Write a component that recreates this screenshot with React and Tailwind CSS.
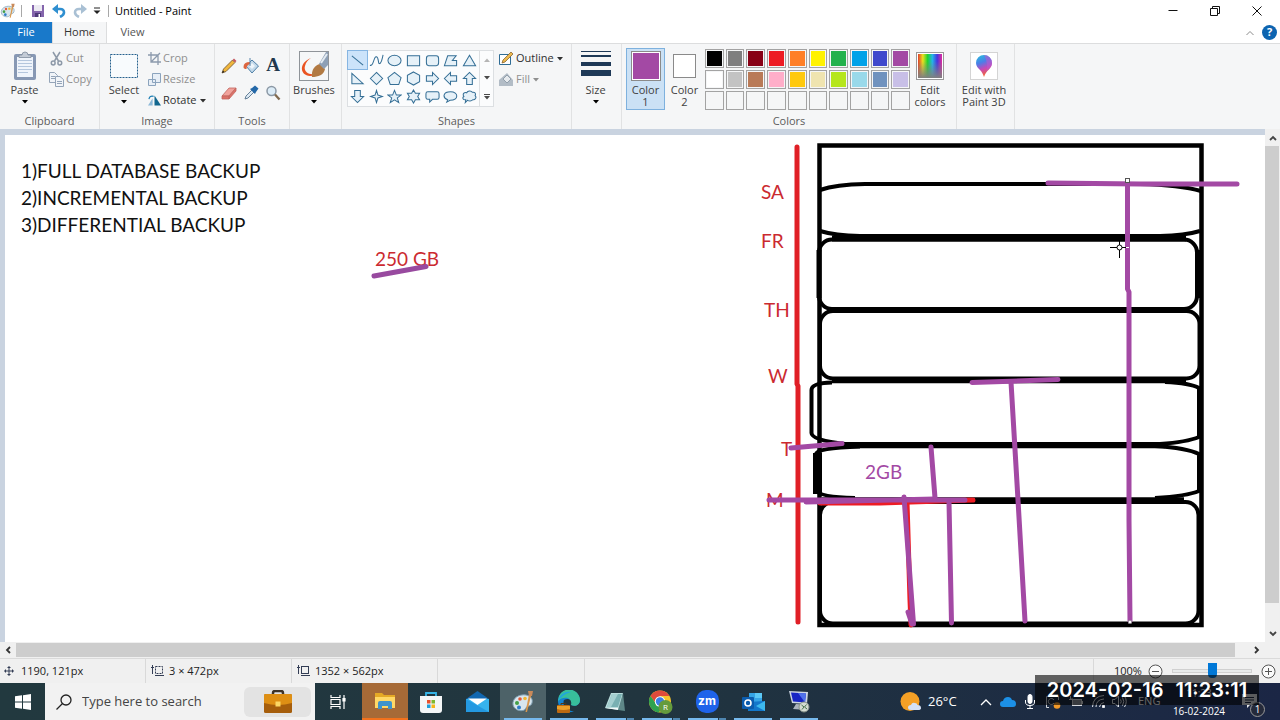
import React from 'react';
import clsx from 'clsx';

const PALETTE = [
  '#000000', '#7f7f7f', '#880015', '#ed1c24', '#ff7f27', '#fff200', '#22b14c', '#00a2e8', '#3f48cc', '#a349a4',
  '#ffffff', '#c3c3c3', '#b97a57', '#ffaec9', '#ffc90e', '#efe4b0', '#b5e61d', '#99d9ea', '#7092be', '#c8bfe7',
  '', '', '', '', '', '', '', '', '', '',
];

const SHAPES = [
  { name: 'Line', d: 'M2 3 L14 13' },
  { name: 'Curve', d: 'M1 13 C5 15 5 3 8 4 C11 5 9 13 12 11 C14 9 14 6 15 2' },
  { name: 'Oval', d: 'M1 8 A7 5.5 0 1 1 15 8 A7 5.5 0 1 1 1 8 Z' },
  { name: 'Rectangle', d: 'M1.5 3 H14.5 V13.500 H1.5 Z' },
  { name: 'Rounded rectangle', d: 'M4 3 H12 Q14.500 3 14.500 6 V10.500 Q14.500 13.500 12 13.500 H4 Q1.5 13.500 1.5 10.500 V6 Q1.5 3 4 3 Z' },
  { name: 'Polygon', d: 'M5 3 H14 L10 8 H14.500 V13.500 H1.500 Z' },
  { name: 'Triangle', d: 'M8 2.500 L14.500 13.500 H1.500 Z' },
  { name: 'Right triangle', d: 'M2 2.500 L14 13.500 H2 Z' },
  { name: 'Diamond', d: 'M8 1.500 L14.500 8 L8 14.500 L1.500 8 Z' },
  { name: 'Pentagon', d: 'M8 1.500 L15 7 L12.500 14.500 H3.500 L1 7 Z' },
  { name: 'Hexagon', d: 'M8 1 L14.500 4.500 V11.500 L8 15 L1.500 11.500 V4.500 Z' },
  { name: 'Right arrow', d: 'M1.500 5 H8 V1.500 L14.500 8 L8 14.500 V11 H1.500 Z' },
  { name: 'Left arrow', d: 'M14.500 5 H8 V1.500 L1.500 8 L8 14.500 V11 H14.500 Z' },
  { name: 'Up arrow', d: 'M5 14.500 V8 H1.500 L8 1.500 L14.500 8 H11 V14.500 Z' },
  { name: 'Down arrow', d: 'M5 1.500 V8 H1.500 L8 14.500 L14.500 8 H11 V1.500 Z' },
  { name: 'Four-point star', d: 'M8 1.500 L9.500 6.500 L14.500 8 L9.500 9.500 L8 14.500 L6.500 9.500 L1.500 8 L6.500 6.500 Z' },
  { name: 'Five-point star', d: 'M8 1.500 L10 6.500 H15 L11 9.500 L12.500 14.500 L8 11.500 L3.500 14.500 L5 9.500 L1 6.500 H6 Z' },
  { name: 'Six-point star', d: 'M8 1 L10 4.500 H14.500 L12.500 8 L14.500 11.500 H10 L8 15 L6 11.500 H1.500 L3.500 8 L1.500 4.500 H6 Z' },
  { name: 'Rounded callout', d: 'M3 3 H13 Q15 3 15 5 V9 Q15 11 13 11 H8 L5 14 V11 H3 Q1 11 1 9 V5 Q1 3 3 3 Z' },
  { name: 'Oval callout', d: 'M4 14 L5 11.500 C-1 9 0 3 8 3 C17 3 17 12 7.500 12 Z' },
  { name: 'Cloud callout', d: 'M4 11.500 C1 12 0 9 2 8 C0 5 3 3 5 4 C6 1.500 10 1.500 11 3.500 C14 3 15 5 14 7 C16 9 14 12 11.500 11.500 C10 13.500 7 13 6 12 L3.500 14.500 Z' },
];

const Caret = ({ className }) => (
  <svg viewBox="0 0 6 4" className={clsx('w-[6px] h-[4px]', className)}>
    <path d="M0 0 H6 L3 3.500 Z" fill="currentColor" />
  </svg>
);

const Group = ({ label, className, children }) => (
  <section className={clsx('flex flex-col shrink-0 border-r border-[#e1e2e3]', className)}>
    <div className="flex h-[68px] pt-1">{children}</div>
    <div className="h-[17px] text-center leading-[17px] text-[#5c5c5c]">{label}</div>
  </section>
);

const BigButton = ({ icon, label, second, caret, className }) => (
  <button type="button" className={clsx('flex flex-col items-center h-[62px] shrink-0', className)}>
    <span className="flex h-[36px] items-center justify-center">{icon}</span>
    <span className="leading-[12px]">
      {label}
      {second && <><br />{second}</>}
    </span>
    {caret && <Caret className="mt-1 text-black" />}
  </button>
);

const SmallButton = ({ icon, label, disabled, caret }) => (
  <button
    type="button"
    disabled={disabled}
    className={clsx('flex h-[21px] items-center gap-[2px] whitespace-nowrap', disabled ? 'text-[#8f8f8f]' : 'text-[#303030]')}
  >
    {icon}
    <span>{label}</span>
    {caret && <Caret className="ml-[1px]" />}
  </button>
);

const PaletteIcon = ({ className }) => (
  <svg viewBox="0 0 24 24" className={className}>
    <path d="M2 15 C1 8 8 4 15 5 C20 6 22 9 21 13 C20 17 16 15 15 18 C14 22 4 22 2 15 Z" fill="#d8e6ee" stroke="#7f9fb2" strokeWidth="1" />
    <circle cx="6" cy="13" r="2" fill="#43a047" />
    <circle cx="9" cy="9" r="1.800" fill="#e25a3a" />
    <circle cx="14" cy="8.500" r="1.800" fill="#f2b632" />
    <circle cx="8" cy="17.500" r="2" fill="#2c7cc9" />
    <path d="M21 2 L16 22 L14.500 22 L18.500 2 Z" fill="#d9964a" />
    <path d="M17 1 L22 1 L21 6 L18 6 Z" fill="#c98a5a" />
  </svg>
);

/* ---------- window chrome ---------- */

const TitleBar = () => (
  <header className="flex h-[22px] shrink-0 items-center bg-white text-xs">
    <PaletteIcon className="h-4 w-4" />
    <span className="ml-[5px] h-3 w-px bg-[#a8a8a8]" />
    <button type="button" aria-label="Save" className="ml-[9px]">
      <svg viewBox="0 0 14 14" className="h-[14px] w-[14px]">
        <path d="M1 1 H13 V13 H1 Z" fill="#8465ac" />
        <path d="M3 1 H11 V7 H3 Z" fill="#eceaf2" />
        <path d="M4 9 H10 V13 H4 Z" fill="#4e3a78" />
        <path d="M7.500 10 H9 V13 H7.500 Z" fill="#fff" />
      </svg>
    </button>
    <button type="button" aria-label="Undo" className="ml-[7px]">
      <svg viewBox="0 0 14 14" className="h-[14px] w-[14px]">
        <path d="M3 5 H8 Q12 5 12 8.500 Q12 11 8 13" fill="none" stroke="#2f8fd0" strokeWidth="2.600" />
        <path d="M0 5 L6 0 V10 Z" fill="#2f8fd0" />
      </svg>
    </button>
    <button type="button" aria-label="Redo" className="ml-[7px]">
      <svg viewBox="0 0 14 14" className="h-[14px] w-[14px]">
        <path d="M11 5 H6 Q2 5 2 8.500 Q2 11 6 13" fill="none" stroke="#a9c0d4" strokeWidth="2.600" />
        <path d="M14 5 L8 0 V10 Z" fill="#a9c0d4" />
      </svg>
    </button>
    <button type="button" aria-label="Customize Quick Access Toolbar" className="ml-[6px]">
      <svg viewBox="0 0 8 8" className="h-2 w-2">
        <path d="M1 1 H7" stroke="#222" />
        <path d="M0.500 3.500 H7.500 L4 7 Z" fill="#222" />
      </svg>
    </button>
    <span className="ml-[7px] h-3 w-px bg-[#a8a8a8]" />
    <h1 className="ml-[6px] text-[11px] text-black">Untitled - Paint</h1>
    <div className="ml-auto flex items-center gap-8 pr-[18px] text-[#111]">
      <button type="button" aria-label="Minimize">
        <svg viewBox="0 0 10 10" className="h-[10px] w-[10px]"><path d="M0.500 4.500 H9.500" stroke="currentColor" /></svg>
      </button>
      <button type="button" aria-label="Restore">
        <svg viewBox="0 0 10 10" className="h-[10px] w-[10px]">
          <path d="M0.500 2.500 H7.500 V9.500 H0.500 Z M2.500 2.500 V0.500 H9.500 V7.500 H7.500" fill="none" stroke="currentColor" />
        </svg>
      </button>
      <button type="button" aria-label="Close">
        <svg viewBox="0 0 10 10" className="h-[10px] w-[10px]"><path d="M0.500 0.500 L9.500 9.500 M9.500 0.500 L0.500 9.500" stroke="currentColor" /></svg>
      </button>
    </div>
  </header>
);

const Tabs = () => (
  <nav className="flex h-[21px] shrink-0 items-stretch bg-white text-[11px]">
    <button type="button" className="w-[52px] bg-[#1979ca] text-white">File</button>
    <button type="button" className="w-[55px] border-x border-[#dcddde] bg-[#f5f6f7] text-[#333]">Home</button>
    <button type="button" className="w-[51px] text-[#555]">View</button>
    <div className="ml-auto flex items-center gap-2 pr-[3px]">
      <button type="button" aria-label="Minimize the Ribbon">
        <svg viewBox="0 0 8 6" className="h-[6px] w-2"><path d="M0.500 5 L4 1.500 L7.500 5" fill="none" stroke="#8a8a8a" /></svg>
      </button>
      <button type="button" aria-label="Help" className="flex h-[15px] w-[15px] items-center justify-center rounded-full bg-[#0d64b0] text-[11px] font-bold text-white">
        ?
      </button>
    </div>
  </nav>
);

/* ---------- ribbon ---------- */

const PasteIcon = () => (
  <svg viewBox="0 0 24 30" className="h-[30px] w-6">
    <rect x="1" y="3" width="22" height="26" rx="2" fill="#8798b4" />
    <rect x="4" y="6" width="16" height="20" fill="#eff4fb" />
    <path d="M5 9.500 H19 M5 12.500 H19 M5 15.500 H19 M5 18.500 H19 M5 21.500 H15" stroke="#b4c6dd" />
    <path d="M6 4 H9 Q9 1 12 1 Q15 1 15 4 H18 V6.500 H6 Z" fill="#c3cbd6" stroke="#7f8b9c" strokeWidth="0.800" />
  </svg>
);

const CutIcon = () => (
  <svg viewBox="0 0 15 15" className="h-[15px] w-[15px]" fill="none" stroke="#8d99a8" strokeWidth="1.500">
    <path d="M4 1 L9.500 10 M11 1 L5.500 10" />
    <circle cx="4.200" cy="12" r="1.900" />
    <circle cx="10.800" cy="12" r="1.900" />
  </svg>
);

const CopyIcon = () => (
  <svg viewBox="0 0 15 15" className="h-[15px] w-[15px]" fill="#f1f4f8" stroke="#94a4b8">
    <path d="M0.500 0.500 H5.500 L8.500 3.500 V10.500 H0.500 Z M2 4.500 H6 M2 6.500 H6" />
    <path d="M6.500 4.500 H11 L14.500 7.500 V14.500 H6.500 Z M8 9.500 H13 M8 11.500 H13" />
  </svg>
);

const CropIcon = () => (
  <svg viewBox="0 0 13 13" className="h-[13px] w-[13px]" fill="none" stroke="#8c9aad" strokeWidth="1.300">
    <path d="M3 0 V10 H13 M0 3 H10 V13 M3 10 L12 1" />
  </svg>
);

const ResizeIcon = () => (
  <svg viewBox="0 0 13 13" className="h-[13px] w-[13px]" fill="#e7eef6" stroke="#8ba3bd">
    <path d="M4.500 0.500 H12.500 V9.500 H4.500 Z M0.500 6.500 H7.500 V12.500 H0.500 Z" />
  </svg>
);

const RotateIcon = () => (
  <svg viewBox="0 0 14 13" className="h-[13px] w-[13px]">
    <path d="M0 12 L5 4 V12 Z" fill="#8db9d9" />
    <path d="M7 1 V12 H14 Z" fill="#12678f" />
    <path d="M1 5 Q2 1 6 2" fill="none" stroke="#1d7fb5" strokeWidth="1.300" />
  </svg>
);

const BrushIcon = () => (
  <svg viewBox="0 0 30 30" className="h-[30px] w-[30px]">
    <rect x="0.500" y="0.500" width="29" height="29" fill="#f5f7f8" stroke="#8f9499" />
    <path d="M12 7 C-1 12 1 25 11 25 C15 25 17 24 18 22 C12 25 4 22 6 15 C7 11 9 9 12 7 Z" fill="#ea5422" />
    <path d="M13 26 C12 19 16 14 21 13 L26 18 C25 24 19 26 13 26 Z" fill="#b17a43" />
    <path d="M20 13 L27 1 H29 V14 L25 18 Z" fill="#8ea0b6" />
    <path d="M22 12 L28 3" stroke="#e4ebf2" strokeWidth="2" />
  </svg>
);

const TOOLS = [
  {
    name: 'Pencil',
    icon: (
      <>
        <path d="M1 15 L2.500 11 L11.500 2 L14 4.500 L5 13.500 Z" fill="#f0b63c" stroke="#6d5330" strokeWidth="0.800" />
        <path d="M11.500 2 L13 0.500 L15.500 3 L14 4.500 Z" fill="#c45860" />
        <path d="M1 15 L2 12.500 L3.500 14 Z" fill="#222" />
      </>
    ),
  },
  {
    name: 'Fill with color',
    icon: (
      <>
        <path d="M3 8 L9 2 L15.500 8 L9 15 Z" fill="#c3d9ea" stroke="#4f7fa6" />
        <path d="M6 8 L9 5 L12 8 L9 11 Z" fill="#eef5fa" />
        <path d="M0.500 9 Q0.500 4 7 4 L7 6 Q3.500 7 3.500 11 Q0.500 11 0.500 9 Z" fill="#dd653f" />
        <path d="M7 0 V8" stroke="#5885ab" />
      </>
    ),
  },
  { name: 'Text', text: 'A' },
  {
    name: 'Eraser',
    icon: (
      <>
        <path d="M1 11 L8 3 H15 L8 11 Z" fill="#f0a29b" stroke="#c2655e" strokeWidth="0.800" />
        <path d="M1 11 H8 V14 H1 Z M8 11 L15 3 V6 L8 14 Z" fill="#dc7168" stroke="#c2655e" strokeWidth="0.800" />
      </>
    ),
  },
  {
    name: 'Color picker',
    icon: (
      <>
        <path d="M2 14 L3 11 L9 5 L11 7 L5 13 Z" fill="#dce9f4" stroke="#56748f" strokeWidth="0.900" />
        <path d="M7 4 L9 3 L12 0.500 L15.500 3.500 L13 7 L12 9 Z" fill="#2368a8" />
      </>
    ),
  },
  {
    name: 'Magnifier',
    icon: (
      <>
        <circle cx="6.500" cy="6" r="4.500" fill="#dcecf7" stroke="#8b98a5" strokeWidth="1.500" />
        <path d="M10 9.500 L14.500 14.500" stroke="#80694e" strokeWidth="2.300" />
      </>
    ),
  },
];

const ShapeGallery = () => (
  <div className="mt-[2px] flex h-[57px] w-[147px] border border-[#dcdfe2] bg-[#fbfcfd]">
    <div className="grid w-[131px] grid-cols-7 grid-rows-3">
      {SHAPES.map((shape, i) => (
        <button
          key={shape.name}
          type="button"
          aria-label={shape.name}
          className={clsx('flex items-center justify-center', i === 0 && 'bg-[#cce3fa] outline outline-[#86b5e2]')}
        >
          <svg viewBox="0 0 16 16" className="h-[15px] w-[15px]">
            <path d={shape.d} fill={i < 2 ? 'none' : '#e6f1f8'} stroke="#356f96" strokeWidth="1.100" />
          </svg>
        </button>
      ))}
    </div>
    <div className="flex flex-1 flex-col border-l border-[#dcdfe2] text-[#4a4a4a]">
      <button type="button" aria-label="Scroll shapes up" className="flex flex-1 items-center justify-center text-[#b5b5b5]">
        <Caret className="rotate-180" />
      </button>
      <button type="button" aria-label="Scroll shapes down" className="flex flex-1 items-center justify-center"><Caret /></button>
      <button type="button" aria-label="More shapes" className="flex flex-1 flex-col items-center justify-center gap-[1px]">
        <span className="h-px w-[6px] bg-[#4a4a4a]" />
        <Caret />
      </button>
    </div>
  </div>
);

const Ribbon = () => (
  <div className="flex h-[86px] shrink-0 border-t border-[#dcddde] bg-[#f5f6f7] text-[11px] text-[#404040]">
    <Group label="Clipboard" className="w-[100px]">
      <BigButton className="w-[49px]" icon={<PasteIcon />} label="Paste" caret />
      <div>
        <SmallButton icon={<CutIcon />} label="Cut" disabled />
        <SmallButton icon={<CopyIcon />} label="Copy" disabled />
      </div>
    </Group>

    <Group label="Image" className="w-[115px]">
      <BigButton
        className="w-[48px]"
        icon={
          <svg viewBox="0 0 28 24" className="h-6 w-7">
            <rect x="0.500" y="0.500" width="27" height="23" fill="#f8fbfd" stroke="#26618e" strokeDasharray="2 1" />
          </svg>
        }
        label="Select"
        caret
      />
      <div>
        <SmallButton icon={<CropIcon />} label="Crop" disabled />
        <SmallButton icon={<ResizeIcon />} label="Resize" disabled />
        <SmallButton icon={<RotateIcon />} label="Rotate" caret />
      </div>
    </Group>

    <Group label="Tools" className="w-[75px]">
      <div className="ml-[3px] mt-1 grid h-[54px] w-[66px] grid-cols-3 grid-rows-2">
        {TOOLS.map((tool) => (
          <button key={tool.name} type="button" aria-label={tool.name} className="flex items-center justify-center">
            {tool.text ? (
              <span className="font-['Liberation_Serif',serif] text-[19px] font-bold text-[#22384d]">{tool.text}</span>
            ) : (
              <svg viewBox="0 0 16 16" className="h-4 w-4" fill="none">{tool.icon}</svg>
            )}
          </button>
        ))}
      </div>
    </Group>

    <Group className="w-[52px]">
      <BigButton className="w-[48px]" icon={<BrushIcon />} label="Brushes" caret />
    </Group>

    <Group label="Shapes" className="w-[230px]">
      <div className="ml-[5px] flex gap-[5px]">
        <ShapeGallery />
        <div>
          <SmallButton
            icon={
              <svg viewBox="0 0 15 15" className="h-[15px] w-[15px]">
                <path d="M0.500 3.500 H11.500 V13.500 H0.500 Z" fill="#fff" stroke="#2f6c95" />
                <path d="M3 12 L4 9 L12 1 L14 3 L6 11 Z" fill="#edb94d" stroke="#8a6430" strokeWidth="0.800" />
              </svg>
            }
            label="Outline"
            caret
          />
          <SmallButton
            icon={
              <svg viewBox="0 0 15 15" className="h-[15px] w-[15px]">
                <path d="M0 14 V8 L8 1 L14 8 V14 Z" fill="#b2bcc6" />
                <path d="M4 7 L8 3 L12 7 L8 11 Z" fill="#e6eaee" stroke="#929fab" />
              </svg>
            }
            label="Fill"
            disabled
            caret
          />
        </div>
      </div>
    </Group>

    <Group className="w-[50px]">
      <BigButton
        className="w-[47px]"
        icon={
          <svg viewBox="0 0 30 30" className="h-[30px] w-[30px]">
            <path d="M0 0 H30 V1 H0 Z M0 4 H30 V6 H0 Z M0 11 H30 V15 H0 Z M0 19 H30 V25 H0 Z" fill="#1e3957" />
          </svg>
        }
        label="Size"
        caret
      />
    </Group>

    <Group label="Colors" className="w-[335px]">
      <BigButton
        className="ml-1 w-[39px] bg-[#cbe1f5] ring-1 ring-inset ring-[#7eb1de]"
        icon={<span className="block h-[30px] w-[30px] border border-[#8a8a8a] bg-[#a349a4] ring-1 ring-inset ring-white" />}
        label="Color"
        second="1"
      />
      <BigButton
        className="w-[39px]"
        icon={<span className="block h-[24px] w-[23px] border border-[#8a8a8a] bg-white" />}
        label="Color"
        second="2"
      />
      <div className="ml-[1px] mt-[1px] grid h-[61px] w-[205px] grid-cols-10 grid-rows-3 gap-[2px]">
        {PALETTE.map((color, i) => (
          <button
            key={i}
            type="button"
            aria-label={color ? `Color ${color}` : 'Custom color'}
            className="border border-[#a3a3a3] ring-1 ring-inset ring-[#f5f6f7]"
            style={{ backgroundColor: color || 'transparent' }}
          />
        ))}
      </div>
      <BigButton
        className="w-[40px]"
        icon={
          <svg viewBox="0 0 28 28" className="h-7 w-7">
            <defs>
              <linearGradient id="hue">
                <stop offset="0" stopColor="#e03c2c" />
                <stop offset="0.200" stopColor="#ece11f" />
                <stop offset="0.400" stopColor="#21d22f" />
                <stop offset="0.600" stopColor="#23b4ea" />
                <stop offset="0.800" stopColor="#4536df" />
                <stop offset="1" stopColor="#e32b9c" />
              </linearGradient>
              <linearGradient id="fade" x2="0" y2="1">
                <stop offset="0.300" stopColor="#808080" stopOpacity="0" />
                <stop offset="1" stopColor="#808080" />
              </linearGradient>
            </defs>
            <rect x="0.500" y="0.500" width="27" height="27" fill="#fff" stroke="#999" />
            <rect x="2" y="2" width="24" height="24" fill="url(#hue)" />
            <rect x="2" y="2" width="24" height="24" fill="url(#fade)" />
          </svg>
        }
        label="Edit"
        second="colors"
      />
    </Group>

    <Group className="w-[58px]">
      <BigButton
        className="w-[54px] whitespace-nowrap"
        icon={
          <svg viewBox="0 0 28 28" className="h-7 w-7">
            <defs>
              <linearGradient id="drop" x2="0.300" y2="1">
                <stop offset="0" stopColor="#25c5dc" />
                <stop offset="0.400" stopColor="#4b7ee8" />
                <stop offset="0.700" stopColor="#c748b8" />
                <stop offset="1" stopColor="#f1663a" />
              </linearGradient>
            </defs>
            <rect x="0.500" y="0.500" width="27" height="27" fill="#fff" stroke="#d4d4d4" />
            <path d="M6 11 A8 8 0 0 1 22 11 C22 17 16 18 14 25 C13 22 12 20 10 18 C8 16 6 14 6 11 Z" fill="url(#drop)" />
            <path d="M14 3 A8 8 0 0 1 22 11 C22 15 18 17 16 20 Q19 12 14 3 Z" fill="#b65ad0" opacity="0.600" />
          </svg>
        }
        label="Edit with"
        second="Paint 3D"
      />
    </Group>
  </div>
);

/* ---------- canvas ---------- */

const LABELS = [
  { text: '250 GB', place: 'left-[370px] top-[110px] text-[#cb2a30]' },
  { text: 'SA', place: 'left-[756px] top-[43px] text-[#cb2a30]' },
  { text: 'FR', place: 'left-[756px] top-[92px] text-[#cb2a30]' },
  { text: 'TH', place: 'left-[759px] top-[161px] text-[#cb2a30]' },
  { text: 'W', place: 'left-[763px] top-[227px] text-[#cb2a30]' },
  { text: 'T', place: 'left-[776px] top-[300px] text-[#cb2a30]' },
  { text: 'M', place: 'left-[761px] top-[351px] text-[#cb2a30]' },
  { text: '2GB', place: 'left-[860px] top-[323px] text-[#a349a4]' },
];

const Drawing = () => (
  <svg viewBox="5 135 1260 507" className="absolute left-0 top-0 h-[507px] w-[1260px]" fill="none">
    {/* backup blocks */}
    <g stroke="#000" strokeWidth="4">
      <path d="M819.500 145.500 H1201.500 V625 H819.500 Z" strokeWidth="4.500" />
      <path d="M820 190 Q836 184.500 865 184 H1140 Q1180 185 1201 191" />
      <path d="M820 231 Q835 235.500 860 236 H1160 Q1185 235.500 1200 231" />
      <path d="M832 238.500 H1186" strokeWidth="6" />
      <rect x="819" y="239.500" width="378" height="69.500" rx="13" />
      <path d="M819 250 V298 M1198 250 V298" strokeWidth="5" />
      <path d="M832 310 H1186" strokeWidth="6" />
      <rect x="820" y="311" width="379.500" height="67.500" rx="13" />
      <path d="M832 380.500 H1186" strokeWidth="5.500" />
      <path d="M832 382.500 Q811.500 383 811.500 390 V433 Q811.500 440 845 444 H1160 Q1187 442 1199 437 V388 Q1190 383 1165 382" />
      <path d="M846 445.200 H1165" strokeWidth="6" />
      <path d="M860 446.500 Q816 448 816 454 V490 Q818 497 855 498" />
      <path d="M817.500 453 V494" strokeWidth="9" />
      <path d="M1155 446 Q1187 448 1199 454 V491 Q1187 496 1155 498" />
      <path d="M822 500.500 H1184" strokeWidth="6.500" />
      <rect x="820" y="502" width="378.500" height="121.500" rx="13" />
    </g>

    <g stroke="#ed1c24" strokeWidth="5" strokeLinecap="round" strokeLinejoin="round">
      <path d="M797 147 V384 L798 386 V622" stroke="#e01f26" />
      <path d="M820 503 H880 L973 500" />
      <path d="M907 502 L910 600 L911 625" />
    </g>

    <g stroke="#a349a4" strokeWidth="5" strokeLinecap="round" strokeLinejoin="round">
      <path d="M374 276 L426 266.500" stroke="#984a9f" />
      <path d="M769 500 H965 M806 502 L935 499" />
      <path d="M791 448 L842 443.500" />
      <path d="M931 447 L935 498" />
      <path d="M904 497 L913.500 624 M908 612 L912 624" />
      <path d="M949 502 L951.500 623" />
      <path d="M972 382.500 L1058 379.500" />
      <path d="M1011 382 L1018 500 L1025 621" />
      <path d="M1048 183 L1140 184 H1237" />
      <path d="M1127.500 184 V289 L1129 292 V520 L1130 621" />
    </g>

    <rect x="1125.500" y="178.500" width="4" height="4" fill="#fff" stroke="#555" />
    <rect x="1128.500" y="620.500" width="3" height="3" fill="#fff" stroke="#777" strokeWidth="0.500" />
    <g stroke="#000">
      <circle cx="1119.500" cy="247.500" r="2.500" fill="#fff" />
      <path d="M1119.500 238 V245 M1119.500 250 V258 M1110 247.500 H1117 M1122 247.500 H1126" />
      <path d="M1126 247.500 H1129" stroke="#fff" />
    </g>
  </svg>
);

const Canvas = () => (
  <main className="flex min-h-0 flex-1 bg-[#c9d3e0]">
    <div className="flex-1 pl-[5px] pt-[6px]">
      <div className="relative h-full overflow-hidden bg-white font-['Lato','Liberation_Sans',sans-serif] text-[19px] leading-[27px]">
        <ol className="pl-4 pt-[22px] text-[#111]">
          <li>1)FULL DATABASE BACKUP</li>
          <li>2)INCREMENTAL BACKUP</li>
          <li>3)DIFFERENTIAL BACKUP</li>
        </ol>
        {LABELS.map((l) => (
          <span key={l.text} className={clsx('absolute whitespace-nowrap', l.place)}>{l.text}</span>
        ))}
        <Drawing />
      </div>
    </div>
    <div className="flex w-[15px] flex-col bg-[#f0f0f0] text-[#444]">
      <button type="button" aria-label="Scroll up" className="flex h-[17px] items-center justify-center">
        <svg viewBox="0 0 8 6" className="h-[6px] w-2"><path d="M1 5 L4 2 L7 5" fill="none" stroke="currentColor" strokeWidth="1.800" /></svg>
      </button>
      <div className="mr-[1px] flex-1 bg-[#cdcdcd]" />
      <div className="h-[22px]" />
      <button type="button" aria-label="Scroll down" className="flex h-[17px] items-center justify-center">
        <svg viewBox="0 0 8 6" className="h-[6px] w-2"><path d="M1 1 L4 4 L7 1" fill="none" stroke="currentColor" strokeWidth="1.800" /></svg>
      </button>
    </div>
  </main>
);

const HorizontalScrollbar = () => (
  <div className="flex h-[17px] shrink-0 items-center border-b border-[#dadada] bg-[#f0f0f0] text-[#333]">
    <button type="button" aria-label="Scroll left" className="flex w-4 justify-center">
      <svg viewBox="0 0 6 8" className="h-2 w-[6px]"><path d="M5 1 L2 4 L5 7" fill="none" stroke="currentColor" strokeWidth="1.800" /></svg>
    </button>
    <div className="h-[14px] flex-1 bg-[#cdcdcd]" />
    <button type="button" aria-label="Scroll right" className="flex w-[45px] justify-end pr-[20px]">
      <svg viewBox="0 0 6 8" className="h-2 w-[6px]"><path d="M1 1 L4 4 L1 7" fill="none" stroke="currentColor" strokeWidth="1.800" /></svg>
    </button>
  </div>
);

const StatusBar = () => (
  <footer className="flex h-6 shrink-0 items-center bg-[#f0f0f0] text-[11px] text-[#222]">
    <div className="flex h-full w-[146px] items-center gap-[7px] border-r border-[#d9d9d9] pl-1">
      <svg viewBox="0 0 10 10" className="h-[10px] w-[10px]"><path d="M5 0 V10 M0 5 H10 M3.500 1.500 H6.500 M3.500 8.500 H6.500 M1.500 3.500 V6.500 M8.500 3.500 V6.500" stroke="#333d55" /></svg>
      1190, 121px
    </div>
    <div className="flex h-full w-[146px] items-center gap-[5px] border-r border-[#d9d9d9] pl-[5px]">
      <svg viewBox="0 0 13 12" className="h-3 w-[13px]" fill="none" stroke="#333d55">
        <rect x="4.500" y="1.500" width="7" height="7" strokeDasharray="2 1" />
        <path d="M1.500 0 V9 M0 2.500 H3 M4 10.500 H13" />
      </svg>
      3 × 472px
    </div>
    <div className="flex h-full w-[146px] items-center gap-[5px] border-r border-[#d9d9d9] pl-[5px]">
      <svg viewBox="0 0 13 12" className="h-3 w-[13px]" fill="none" stroke="#333d55">
        <rect x="4.500" y="1.500" width="7" height="7" />
        <path d="M1.500 0 V9 M0 2.500 H3 M4 10.500 H13" />
      </svg>
      1352 × 562px
    </div>
    <div className="h-full w-[147px] border-r border-[#d9d9d9]" />
    <div className="ml-auto flex h-full items-center border-l border-[#d9d9d9] pl-[20px] pr-1">
      <label htmlFor="zoom" className="w-[34px]">100%</label>
      <button type="button" aria-label="Zoom out">
        <svg viewBox="0 0 15 15" className="h-[15px] w-[15px]" fill="#fafafa" stroke="#555"><circle cx="7.500" cy="7.500" r="6.500" /><path d="M4 7.500 H11" /></svg>
      </button>
      <input
        id="zoom"
        type="range"
        defaultValue="50"
        className="mx-[9px] h-[15px] w-[80px] appearance-none bg-transparent [&::-webkit-slider-runnable-track]:h-1 [&::-webkit-slider-runnable-track]:border [&::-webkit-slider-runnable-track]:border-[#d0d0d0] [&::-webkit-slider-runnable-track]:bg-[#e7eaea] [&::-webkit-slider-thumb]:-mt-[7px] [&::-webkit-slider-thumb]:h-[15px] [&::-webkit-slider-thumb]:w-[9px] [&::-webkit-slider-thumb]:appearance-none [&::-webkit-slider-thumb]:rounded-b-sm [&::-webkit-slider-thumb]:bg-[#0078d7]"
      />
      <button type="button" aria-label="Zoom in">
        <svg viewBox="0 0 15 15" className="h-[15px] w-[15px]" fill="#fafafa" stroke="#555"><circle cx="7.500" cy="7.500" r="6.500" /><path d="M4 7.500 H11 M7.500 4 V11" /></svg>
      </button>
    </div>
  </footer>
);

/* ---------- taskbar ---------- */

const TaskButton = ({ label, running, stacked, className, children }) => (
  <button type="button" aria-label={label} className={clsx('relative flex h-full w-[46px] shrink-0 items-center justify-center', className)}>
    {children}
    {running && (
      <span className="absolute inset-x-1 bottom-0 flex h-[2px] gap-px">
        <span className="flex-1 bg-[#76b9ed]" />
        {stacked && <span className="w-[7px] bg-[#4f86b0]" />}
      </span>
    )}
  </button>
);

const Taskbar = () => (
  <div className="relative flex h-[37px] shrink-0 items-stretch bg-linear-to-r from-[#22393f] via-[#21353f] to-[#1b2645] text-white">
    <button type="button" aria-label="Start" className="flex w-[45px] items-center justify-center">
      <svg viewBox="0 0 16 16" className="h-4 w-4" fill="#fff">
        <path d="M0 2.300 L7 1.300 V7.500 H0 Z M8 1.200 L16 0 V7.500 H8 Z M0 8.500 H7 V14.700 L0 13.700 Z M8 8.500 H16 V16 L8 14.800 Z" />
      </svg>
    </button>
    <div className="flex w-[270px] items-center bg-[#f2f2f2] pl-[11px] pr-1">
      <svg viewBox="0 0 16 16" className="h-4 w-4 shrink-0" fill="none" stroke="#222" strokeWidth="1.300">
        <circle cx="10" cy="6" r="5" />
        <path d="M6.500 9.500 L0.500 15.500" />
      </svg>
      <input
        type="search"
        aria-label="Type here to search"
        placeholder="Type here to search"
        className="ml-[10px] min-w-0 flex-1 bg-transparent text-[13px] text-[#444] placeholder:text-[#444]"
      />
      <span className="flex h-[30px] w-[67px] items-center justify-center rounded-md bg-[#e3e3e3]">
        <svg viewBox="0 0 30 24" className="h-6 w-[30px]">
          <path d="M10 5 V3 Q10 1 12 1 H18 Q20 1 20 3 V5" fill="none" stroke="#3e3327" strokeWidth="2.500" />
          <rect x="1" y="4" width="28" height="19" rx="1.500" fill="#a65e0c" />
          <path d="M1 5 Q1 4 3 4 H27 Q29 4 29 5 V13 Q15 17 1 13 Z" fill="#de8f14" />
          <rect x="12.500" y="11.500" width="5" height="5" fill="#fbd765" />
        </svg>
      </span>
    </div>

    <TaskButton label="Task View">
      <svg viewBox="0 0 16 14" className="h-[14px] w-4" fill="none" stroke="#fff" strokeWidth="1.200">
        <path d="M1 0 V2.500 H10 V0 M1 14 V11.500 H10 V14 M1 4.500 H10 V9.500 H1 Z M14 0 V14" />
        <path d="M13 3.500 H15 V6 H13 Z" fill="#fff" />
      </svg>
    </TaskButton>
    <TaskButton label="File Explorer" className="ml-px border-b-2 border-[#f2711c] bg-[#a66a37]">
      <svg viewBox="0 0 20 17" className="h-[17px] w-5">
        <path d="M0 1 H7 L9 3 H20 V16 H0 Z" fill="#e5a925" />
        <path d="M0 5 H20 V16 H0 Z" fill="#ffd866" />
        <path d="M3 17 V11 Q3 9 5 9 H15 Q17 9 17 11 V17 H13 V14 H7 V17 Z" fill="#3f93cb" />
      </svg>
    </TaskButton>
    <TaskButton label="Microsoft Store">
      <svg viewBox="0 0 22 22" className="h-[22px] w-[22px]">
        <path d="M6 6 V2 H16 V6" fill="none" stroke="#35b4e7" strokeWidth="1.800" />
        <path d="M0 5 H22 V19 Q22 22 19 22 H3 Q0 22 0 19 Z" fill="#f4f6f7" />
        <path d="M7 9 H10.500 V12.500 H7 Z" fill="#e9502c" />
        <path d="M11.500 9 H15 V12.500 H11.500 Z" fill="#7db82f" />
        <path d="M7 13.500 H10.500 V17 H7 Z" fill="#1f9fdc" />
        <path d="M11.500 13.500 H15 V17 H11.500 Z" fill="#f5b71c" />
      </svg>
    </TaskButton>
    <TaskButton label="Mail">
      <svg viewBox="0 0 23 21" className="h-[21px] w-[23px]">
        <path d="M0 8 L11.500 0 L23 8 Z" fill="#1267b0" />
        <path d="M0 8 H23 V21 H0 Z" fill="#36b3ee" />
        <path d="M0 8 L23 21 H0 Z" fill="#1c8fdc" opacity="0.700" />
        <path d="M2 7.500 H21 L11.500 14 Z" fill="#fff" />
      </svg>
    </TaskButton>
    <TaskButton label="Paint" className="bg-[#4d6268]" running>
      <PaletteIcon className="h-6 w-6" />
    </TaskButton>
    <TaskButton label="Microsoft Edge" running>
      <svg viewBox="0 0 24 24" className="h-6 w-6">
        <path d="M1 12 A11 11 0 0 1 23 10 C23 15 18 17 14 15 C17 11 12 7 7 10 C5 15 9 21 17 21 A11 11 0 0 1 1 12 Z" fill="#1583cf" />
        <path d="M1 11 A11 11 0 0 1 23 10 C23 15 18 17 14 15 C16 8 7 5 1 11 Z" fill="#38bf9b" />
        <path d="M1 11 C3 4 9 1 14 2 C9 3 5 6 1 11 Z" fill="#20a5df" />
        <rect x="0" y="15" width="13" height="8" rx="1" fill="#bd6a12" />
        <path d="M0 16 H13 V19 Q6 21 0 19 Z" fill="#eda02a" />
        <path d="M4 15 V13.500 H9 V15" fill="none" stroke="#503818" />
      </svg>
    </TaskButton>
    <TaskButton label="Notepad" running stacked>
      <svg viewBox="0 0 22 20" className="h-5 w-[22px]">
        <path d="M7 1 L19 1 L16 18 L1 16 Z" fill="#b9dcdc" />
        <path d="M8 2 L18 2 L14 15 L3 15 Z" fill="#79b0b2" />
        <path d="M8 2 L14 2 L7 15 L3 15 Z" fill="#a5cfd0" />
        <path d="M19 1 L21 19 L14 18 Z" fill="#5e8788" />
        <path d="M1 16 L14 16 L14 18 Z" fill="#f2f9f9" />
      </svg>
    </TaskButton>
    <TaskButton label="Google Chrome" running stacked>
      <svg viewBox="0 0 24 24" className="h-6 w-6">
        <circle cx="11" cy="11.500" r="11" fill="#f6c52c" />
        <path d="M1.500 6 A11 11 0 0 1 20.500 6 H11 L7 13.500 Z" fill="#df4b3c" />
        <path d="M1.500 6 A11 11 0 0 0 10 22.500 L14 15 H8 Z" fill="#2fa24f" />
        <circle cx="11" cy="11.500" r="5.200" fill="#fff" />
        <circle cx="11" cy="11.500" r="4.200" fill="#3d7fe6" />
        <circle cx="16.500" cy="17" r="7" fill="#659b3d" />
        <text x="16.500" y="19.800" textAnchor="middle" fontSize="8" fontFamily="Open Sans, sans-serif" fill="#fff">R</text>
      </svg>
    </TaskButton>
    <TaskButton label="Zoom" running stacked>
      <span className="flex h-[23px] w-[23px] items-center justify-center rounded-[10px] bg-[#1f63ea] pb-[2px] font-['Inter',sans-serif] text-[12px] leading-none font-bold">zm</span>
    </TaskButton>
    <TaskButton label="Outlook" running>
      <svg viewBox="0 0 23 20" className="h-5 w-[23px]">
        <path d="M7 1 H20 V11 H7 Z" fill="#35a4e6" />
        <path d="M13 1 H20 V6 H13 Z" fill="#5cc8f5" />
        <path d="M6 10 L23 9 V19 H6 Z" fill="#1377cb" />
        <path d="M14 14 L23 9 V19 Z" fill="#3db9ee" />
        <rect x="0" y="5" width="12" height="12" rx="1" fill="#0b5cae" />
        <circle cx="6" cy="11" r="3" fill="none" stroke="#fff" strokeWidth="1.600" />
      </svg>
    </TaskButton>
    <TaskButton label="Remote Desktop" running>
      <svg viewBox="0 0 22 23" className="h-[23px] w-[22px]">
        <path d="M1 1 L20 2 L19 14 L4 13 Z" fill="#cdd6e2" />
        <path d="M3 2.500 L18 3.500 L17 12.500 L5 11.500 Z" fill="#1826c4" />
        <path d="M10 3 L18 3.500 L17 12.500 Z" fill="#5072ea" />
        <path d="M8 14 L14 14.500 L14 17 L18 20 L5 19 Z" fill="#aab3bd" />
        <circle cx="16" cy="17" r="5" fill="#d5dcd2" stroke="#848f86" />
        <path d="M13.500 15 L16 17 L14 19.500 M18.500 14.500 L16.500 17 L19 19" fill="none" stroke="#46704b" />
      </svg>
    </TaskButton>

    {/* tray */}
    <div className="ml-auto flex items-center text-[13px]">
      <svg viewBox="0 0 21 20" className="h-5 w-[21px]">
        <circle cx="10" cy="9.500" r="9.500" fill="#f4a026" />
        <path d="M11 18 Q8 18 8 15.500 Q8 13 11 13 Q12 10 15 11 Q17 11 17.500 13 Q21 13 21 16 Q21 18 18 18 Z" fill="#d5e1f5" />
      </svg>
      <span className="ml-[7px] w-[52px]">26°C</span>
      <svg viewBox="0 0 12 8" className="h-2 w-3" fill="none" stroke="#fff" strokeWidth="1.300"><path d="M1 7 L6 2 L11 7" /></svg>
      <svg viewBox="0 0 16 11" className="ml-[8px] h-[11px] w-4" fill="#1c90e6">
        <path d="M3 11 Q0 11 0 8 Q0 5 3 5 Q4 1 8 1 Q11 1 12 4 Q16 4 16 8 Q16 11 13 11 Z" />
      </svg>
      <svg viewBox="0 0 12 15" className="ml-[8px] h-[15px] w-3" fill="none" stroke="#fff">
        <rect x="4" y="0.500" width="4" height="9" rx="2" fill="#fff" />
        <path d="M1.500 6 V8 Q1.500 11.500 6 11.500 Q10.500 11.500 10.500 8 V6 M6 11.500 V14.500 M3 14.500 H9" />
      </svg>
      <svg viewBox="0 0 16 14" className="ml-[9px] h-[14px] w-4" fill="none" stroke="#d6d9de">
        <path d="M4 1.500 H1.500 V12.500 H4 M10 1.500 H13.500 V5 M9 5 A3 3 0 1 0 9 8" />
        <circle cx="12" cy="10.500" r="3.300" fill="#f29a2a" stroke="none" />
      </svg>
      <svg viewBox="0 0 15 12" className="ml-[8px] h-3 w-[15px]" fill="none" stroke="#d6d9de">
        <rect x="3.500" y="3.500" width="9" height="6" fill="#8e949e" />
        <path d="M13.500 5 V8 M1.500 0 V3 H4 M0 3.500 H5" />
      </svg>
      <svg viewBox="0 0 13 13" className="ml-[8px] h-[13px] w-[13px]" fill="none" stroke="#e2e5ea">
        <path d="M0.500 12 Q1 1 12 0.500 M4 12 Q4 4.500 12 4 M7.500 12 Q8 8 12 7.500" />
        <path d="M10.500 10.500 H12.500 V12.500 H10.500 Z" fill="#fff" />
      </svg>
      <svg viewBox="0 0 15 13" className="ml-[7px] h-[13px] w-[15px]" fill="none" stroke="#e2e5ea">
        <path d="M0.500 4.500 H3 L6.500 1 V12 L3 8.500 H0.500 Z M8.500 4.500 Q10 6.500 8.500 8.500 M10.500 2.500 Q13 6.500 10.500 10.500 M12.500 1 Q16 6.500 12.500 12" />
      </svg>
      <span className="ml-[11px] w-[33px] text-[11px]">ENG</span>
      <div className="flex w-[56px] flex-col text-center text-[10px] leading-[18px]">
        <time>11:23</time>
        <time>16-02-2024</time>
      </div>
      <div className="relative ml-[15px] mr-[23px]">
        <svg viewBox="0 0 15 15" className="h-[15px] w-[15px]">
          <path d="M0 0 H15 V11 H8 L5 14 V11 H0 Z" fill="#e4e6ea" />
          <path d="M3 3.500 H12 M3 6 H12 M3 8.500 H9" stroke="#222c46" />
        </svg>
        <span className="absolute left-2 top-2 flex h-[15px] w-[15px] items-center justify-center rounded-full border border-[#999] bg-[#252a3a] text-[10px]">1</span>
      </div>
    </div>

    <div className="absolute bottom-[15px] right-[21px] flex h-[30px] w-[224px] items-center justify-center gap-3 bg-black/60 font-['Inter',sans-serif] text-[20px] font-semibold">
      <span>2024-02-16</span>
      <span>11:23:11</span>
    </div>
  </div>
);

export default function App() {
  return (
    <div className="flex h-screen flex-col overflow-hidden bg-white font-['Open_Sans','Noto_Sans',sans-serif]">
      <TitleBar />
      <Tabs />
      <Ribbon />
      <Canvas />
      <HorizontalScrollbar />
      <StatusBar />
      <Taskbar />
    </div>
  );
}
